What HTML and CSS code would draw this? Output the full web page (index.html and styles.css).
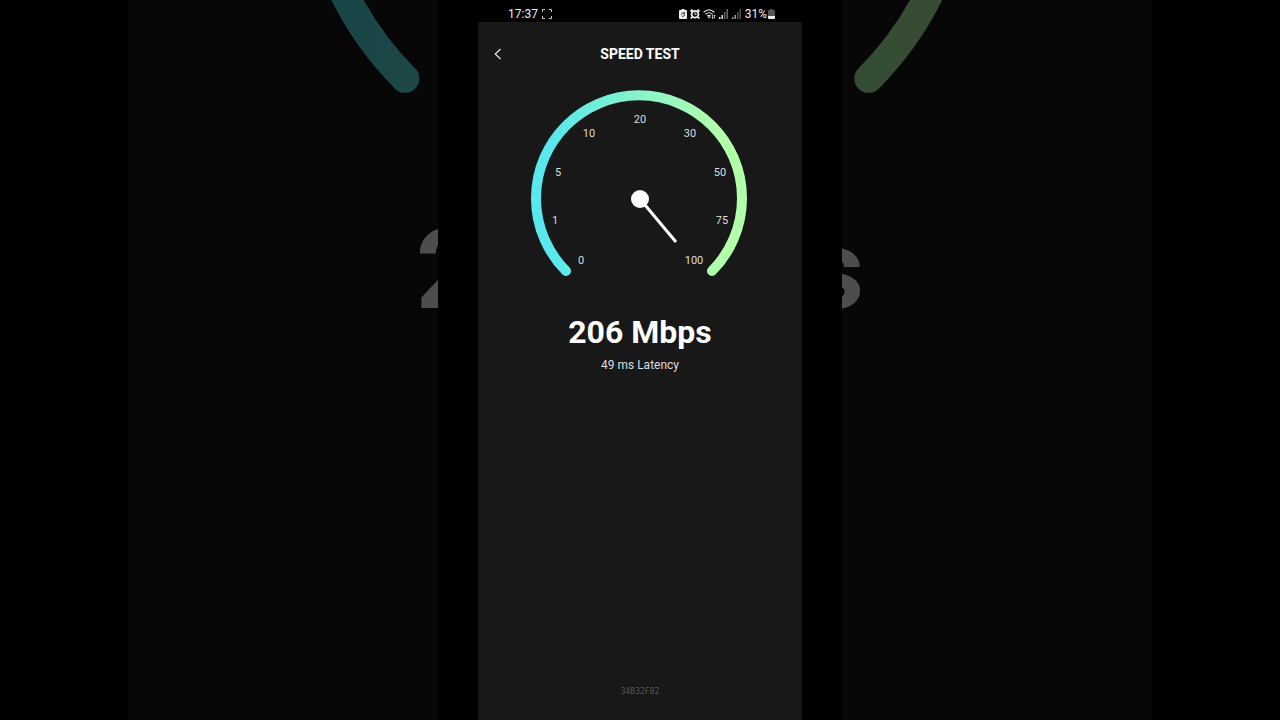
FILE: index.html
```html
<!DOCTYPE html>
<html lang="en">
<head>
    <meta charset="UTF-8">
    <meta name="viewport" content="width=device-width, initial-scale=1.0">
    <title>Speed Test</title>
    <link rel="stylesheet" href="styles.css">
</head>
<body>
    <div class="stage">
        <!-- enlarged, dimmed copy behind the phone, only the outer letters stick out -->
        <div class="backdrop" aria-hidden="true">
            <svg class="backdrop-gauge" viewBox="0 0 218 186">
                <path class="arc" d="M35 181 A103 103 0 1 1 181 181" stroke="url(#arcColor)"/>
            </svg>
            <div class="backdrop-speed"><span>2</span><span>s</span></div>
        </div>

        <div class="phone">
            <div class="status">
                <div class="status-left">
                    <span>17:37</span>
                    <svg width="10" height="10" viewBox="0 0 10 10" fill="none" stroke="#ccc">
                        <path d="M.5 3V.5H3M7 .5h2.500V3M9.500 7v2.500H7M3 9.500H.5V7"/>
                    </svg>
                </div>
                <div class="status-right">
                    <svg width="8" height="10" viewBox="0 0 8 10">
                        <path d="M2.500 0h3v1H7q1 0 1 1v7q0 1-1 1H1Q0 10 0 9V2q0-1 1-1h1.500z" fill="#eee"/>
                        <path d="M2.300 5.500a1.700 1.700 0 0 1 3-1M5.700 5.500a1.700 1.700 0 0 1-3 1.200M5.500 3.300v1.400H4.200" fill="none" stroke="#111" stroke-width=".9"/>
                    </svg>
                    <svg width="10" height="10" viewBox="0 0 10 10">
                        <path d="M.5 2.500l2-2M9.500 2.500l-2-2M2 8L.7 9.500M8 8l1.300 1.500" stroke="#eee" stroke-width="1.800"/>
                        <circle cx="5" cy="5.200" r="4.300" fill="#eee"/>
                        <circle cx="5" cy="5.200" r="2.500" fill="#111"/>
                        <path d="M5 3.200v2.200h1.700" fill="none" stroke="#eee" stroke-width=".9"/>
                    </svg>
                    <svg width="13" height="10" viewBox="0 0 13 10" fill="none" stroke="#ddd" stroke-width="1.200">
                        <path d="M.6 3.300Q6 -1.500 11.400 3.300M2.400 5.300Q6 2.200 9.600 5.300M4.200 7.200Q6 5.700 7.800 7.200"/>
                        <path d="M6 7l1.200 1.300L6 9.500 4.800 8.300z" fill="#ddd" stroke="none"/>
                        <path d="M9.500 6v3.500M11.500 6v3.500M8.600 8.500l.9 1 .9-1M10.600 7l.9-1 .9 1" stroke-width=".8"/>
                    </svg>
                    <svg width="10" height="10" viewBox="0 0 10 10">
                        <path d="M0 8h1.500v2H0zM2.500 6H4v4H2.500z" fill="#ddd"/>
                        <path d="M5 3h1.500v7H5zM7.500 0H9v10H7.500z" fill="#666"/>
                    </svg>
                    <svg width="10" height="10" viewBox="0 0 10 10">
                        <path d="M0 8h1.500v2H0zM2.500 6H4v4H2.500z" fill="#999"/>
                        <path d="M5 3h1.500v7H5zM7.500 0H9v10H7.500z" fill="#555"/>
                    </svg>
                    <div class="battery">
                        <span>31%</span>
                        <svg width="7" height="10" viewBox="0 0 7 10">
                            <path d="M2 0h3v1h1q1 0 1 1v5H0V2q0-1 1-1h1z" fill="#555"/>
                            <path d="M0 7h7v2q0 1-1 1H1Q0 10 0 9z" fill="#eee"/>
                        </svg>
                    </div>
                </div>
            </div>

            <main class="screen">
                <header class="topbar">
                    <button type="button" class="back" aria-label="Back">
                        <svg width="8" height="12" viewBox="0 0 8 12" fill="none" stroke="#eee" stroke-width="1.100">
                            <path d="M6.500 1L1.200 6l5.300 5"/>
                        </svg>
                    </button>
                    <h1>SPEED TEST</h1>
                </header>

                <svg class="gauge" viewBox="0 0 218 186">
                    <defs>
                        <linearGradient id="arcColor" gradientUnits="userSpaceOnUse" x1="20" y1="0" x2="190" y2="0">
                            <stop offset="0" stop-color="#58e8ee"/>
                            <stop offset="1" stop-color="#b2ffaa"/>
                        </linearGradient>
                    </defs>
                    <path class="arc" d="M35 181 A103 103 0 1 1 181 181" stroke="url(#arcColor)"/>
                    <g class="ticks">
                        <text x="50" y="174">0</text>
                        <text x="24" y="134">1</text>
                        <text x="27" y="86">5</text>
                        <text x="58" y="47">10</text>
                        <text x="109" y="33">20</text>
                        <text x="159" y="47">30</text>
                        <text x="189" y="86">50</text>
                        <text x="191" y="134">75</text>
                        <text x="163" y="174">100</text>
                    </g>
                    <path d="M109 109L145 152" stroke="#fff" stroke-width="3"/>
                    <circle cx="109" cy="109" r="9" fill="#fff"/>
                </svg>

                <div class="speed">206 Mbps</div>
                <div class="latency">49 ms Latency</div>
                <footer class="device">34B32FB2</footer>
            </main>
        </div>
    </div>
</body>
</html>
```
FILE: styles.css
```css
* {
    box-sizing: border-box;
}
body {
    margin: 0;
    background: #000;
    color: #fff;
    font-family: Roboto, sans-serif;
}
.stage {
    position: relative;
    display: flex;
    justify-content: center;
    min-height: 100vh;
    overflow: hidden;
}
.backdrop {
    position: absolute;
    top: 0;
    bottom: 0;
    left: 10%;
    right: 10%;
    display: flex;
    flex-direction: column;
    align-items: center;
    overflow: hidden;
    background: #181818;
    opacity: 0.3;
}
.backdrop-gauge {
    flex: none;
    width: 692px;
    margin-top: -496px;
}
.backdrop-gauge .arc {
    stroke-width: 9;
}
.backdrop-speed {
    display: flex;
    justify-content: space-between;
    width: 448px;
    margin-top: 116px;
    font-size: 112px;
    font-weight: bold;
    line-height: 120px;
}
.arc {
    fill: none;
    stroke-width: 10;
    stroke-linecap: round;
}
.phone {
    position: relative;
    display: flex;
    flex-direction: column;
    width: 404px;
    max-width: 100%;
    padding: 0 40px;
    background: #000;
}
.status {
    display: flex;
    justify-content: space-between;
    align-items: center;
    height: 22px;
    padding: 6px 27px 0 30px;
    font-size: 12px;
    line-height: 16px;
    color: #eee;
}
.status-left {
    display: flex;
    align-items: center;
    gap: 4px;
}
.status-right {
    display: flex;
    align-items: center;
    gap: 3px;
}
.battery {
    display: flex;
    align-items: center;
    gap: 1px;
}
.screen {
    flex: 1;
    display: flex;
    flex-direction: column;
    align-items: center;
    background: #181818;
}
.topbar {
    display: grid;
    grid-template-columns: 40px 1fr 40px;
    align-items: center;
    width: 100%;
    height: 64px;
}
.back {
    display: flex;
    justify-content: center;
    padding: 10px;
    border: none;
    background: none;
    cursor: pointer;
}
h1 {
    margin: 0;
    font-size: 14px;
    line-height: 20px;
    text-align: center;
}
.gauge {
    width: 218px;
    margin-top: 4px;
}
.ticks {
    fill: #ddd;
    font-size: 11px;
    text-anchor: middle;
}
.speed {
    margin-top: 36px;
    font-size: 32px;
    font-weight: bold;
    line-height: 40px;
}
.latency {
    margin-top: 4px;
    font-size: 12px;
    line-height: 18px;
    color: #ddd;
}
.device {
    margin-top: auto;
    padding-bottom: 21px;
    font-family: "DejaVu Sans Mono", monospace;
    font-size: 8px;
    line-height: 14px;
    color: #555;
}
```
